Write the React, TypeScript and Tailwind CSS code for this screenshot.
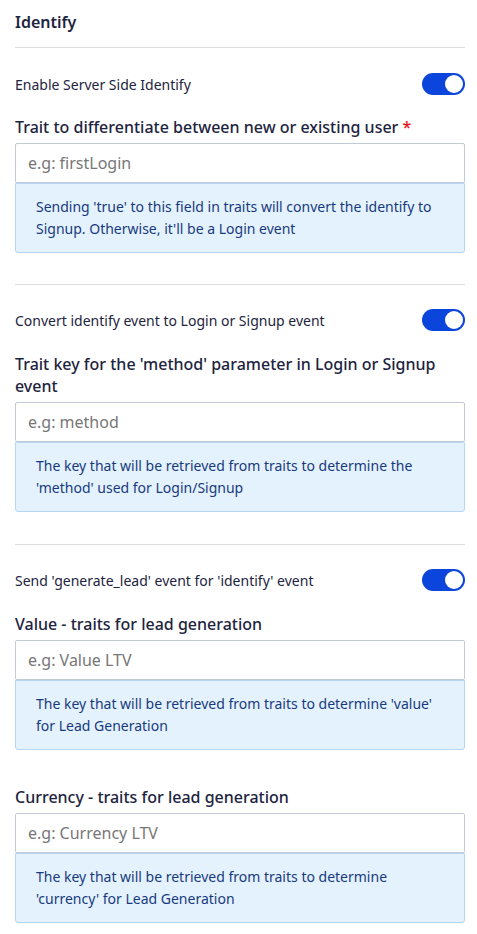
type FieldProps = {
  label: React.ReactNode
  placeholder: string
  help: React.ReactNode
}

function Toggle() {
  return (
    <div className="flex h-[22px] w-[43px] shrink-0 items-center justify-end rounded-full bg-[#0b45dc] px-[2px]">
      <div className="h-[18px] w-[18px] rounded-full bg-white" />
    </div>
  )
}

function SwitchRow({ text }: { text: string }) {
  return (
    <div className="flex items-center justify-between h-[22px]">
      <span className="text-[14px] text-[#1d2440]">{text}</span>
      <Toggle />
    </div>
  )
}

function Field({ label, placeholder, help }: FieldProps) {
  return (
    <div>
      <div className="text-[16px] font-medium leading-[22px] text-[#1d2440]">{label}</div>
      <input
        className="mt-[5px] block h-[40px] w-full rounded-[2px] border border-[#c4cad3] bg-white px-[12px] text-[16px] text-[#1d2440] placeholder:text-[#777] outline-none"
        placeholder={placeholder}
      />
      <div className="rounded-b-[3px] border border-[#b6d6f6] bg-[#e4f2fe] px-[20px] pt-[12px] pb-[12px] text-[14px] leading-[22px] text-[#183a7d]">
        {help}
      </div>
    </div>
  )
}

export default function App() {
  return (
    <div className="h-screen overflow-hidden bg-white pl-[15px] pr-[12px] pt-[9px] font-['Noto_Sans',sans-serif]">
      <h2 className="text-[16px] font-semibold leading-[26px] text-[#1d2440]">Identify</h2>
      <div className="mt-[12px] border-t border-[#dcdcdc]" />

      <div className="mt-[25px]">
        <SwitchRow text="Enable Server Side Identify" />
      </div>
      <div className="mt-[21px]">
        <Field
          label={
            <>
              Trait to differentiate between new or existing user <span className="text-[#e8101a]">*</span>
            </>
          }
          placeholder="e.g: firstLogin"
          help="Sending 'true' to this field in traits will convert the identify to Signup. Otherwise, it'll be a Login event"
        />
      </div>

      <div className="mt-[31px] border-t border-[#dcdcdc]" />

      <div className="mt-[24px]">
        <SwitchRow text="Convert identify event to Login or Signup event" />
      </div>
      <div className="mt-[22px]">
        <Field
          label="Trait key for the 'method' parameter in Login or Signup event"
          placeholder="e.g: method"
          help="The key that will be retrieved from traits to determine the 'method' used for Login/Signup"
        />
      </div>

      <div className="mt-[32px] border-t border-[#dcdcdc]" />

      <div className="mt-[24px]">
        <SwitchRow text="Send 'generate_lead' event for 'identify' event" />
      </div>
      <div className="mt-[22px]">
        <Field
          label="Value - traits for lead generation"
          placeholder="e.g: Value LTV"
          help="The key that will be retrieved from traits to determine 'value' for Lead Generation"
        />
      </div>

      <div className="mt-[36px]">
        <Field
          label="Currency - traits for lead generation"
          placeholder="e.g: Currency LTV"
          help="The key that will be retrieved from traits to determine 'currency' for Lead Generation"
        />
      </div>
    </div>
  )
}
